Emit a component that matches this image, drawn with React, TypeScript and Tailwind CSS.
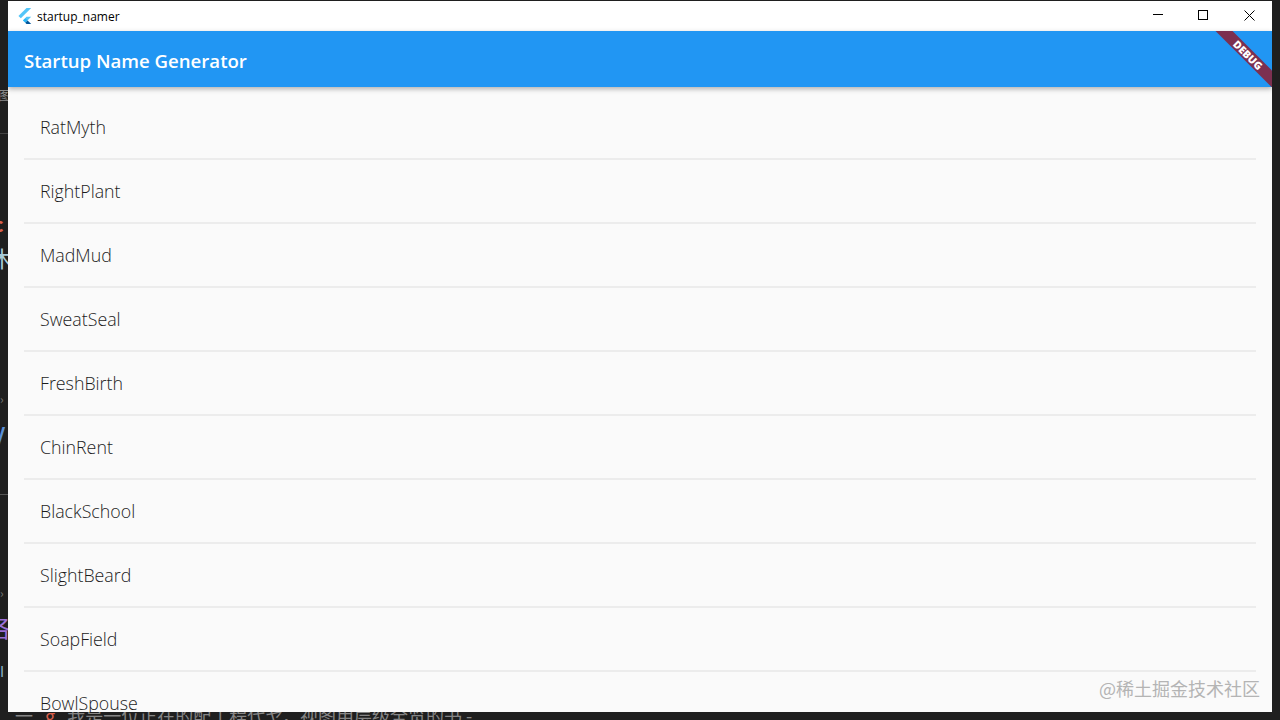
const names = [
  'RatMyth',
  'RightPlant',
  'MadMud',
  'SweatSeal',
  'FreshBirth',
  'ChinRent',
  'BlackSchool',
  'SlightBeard',
  'SoapField',
  'BowlSpouse',
];

function FlutterLogo() {
  return (
    <svg width="14" height="16" viewBox="0 0 14 17">
      <path d="M0 8.5 L8.6 0 L13.6 0 L2.6 11 Z" fill="#54C5F8" />
      <path d="M4.8 13.2 L8.6 9.2 L13.6 9.2 L9.8 13 Z" fill="#54C5F8" />
      <path d="M4.8 13.2 L7.3 10.8 L9.8 13.2 L7.3 15.7 Z" fill="#29B6F6" />
      <path d="M7.3 15.7 L9.8 13.2 L13.6 17 L8.6 17 Z" fill="#01579B" />
    </svg>
  );
}

function WindowButtons() {
  return (
    <div className="ml-auto flex h-full pb-[2px] text-black">
      <div className="flex w-[46px] items-center justify-center pl-[2px]">
        <svg width="10" height="10" viewBox="0 0 10 10" fill="none" stroke="currentColor" shapeRendering="crispEdges">
          <path d="M0 4.5 H10" />
        </svg>
      </div>
      <div className="flex w-[46px] items-center justify-center">
        <svg width="10" height="10" viewBox="0 0 10 10" fill="none" stroke="currentColor" shapeRendering="crispEdges">
          <rect x="0.5" y="0.5" width="9" height="9" />
        </svg>
      </div>
      <div className="flex w-[46px] items-center justify-center">
        <svg width="11" height="11" viewBox="0 0 11 11" fill="none" stroke="currentColor">
          <path d="M0.5 0.5 L10.5 10.5 M10.5 0.5 L0.5 10.5" />
        </svg>
      </div>
    </div>
  );
}

// editor behind the window, only its left edge shows
function EditorEdge() {
  return (
    <div className="flex w-2 shrink-0 flex-col overflow-hidden whitespace-nowrap font-['Noto_Sans_CJK_SC',sans-serif] leading-none">
      <span className="-ml-[2px] mt-[88px] h-[13px] text-[13px] leading-none text-[#8a8a8a]">图</span>
      <div className="mt-[32px] h-px shrink-0 bg-[#444]" />
      <span className="-ml-[7px] mt-[80px] h-[20px] text-[20px] font-bold leading-none text-[#d9604c]">c</span>
      <span className="-ml-[9px] mt-[12px] h-[22px] text-[22px] leading-none text-[#a9cbd8]">木</span>
      <span className="mt-[125px] h-[12px] text-[12px] leading-none text-[#777]">›</span>
      <span className="-ml-[11px] mt-[17px] h-[28px] text-[28px] leading-none text-[#5b8fd6]">V</span>
      <div className="mt-[44px] h-px shrink-0 bg-[#555]" />
      <span className="mt-[92px] h-[12px] text-[12px] leading-none text-[#777]">›</span>
      <span className="-ml-[12px] mt-[16px] h-[24px] text-[24px] leading-none text-[#9a6fd6]">各</span>
      <span className="mt-[25px] h-[14px] text-[14px] leading-none text-[#8fb8cc]">I</span>
    </div>
  );
}

export default function App() {
  return (
    <div className="relative flex h-[720px] w-[1280px] overflow-hidden bg-[#1f1f1f] font-['Open_Sans',sans-serif]">
      <EditorEdge />

      <div className="flex w-[1264px] shrink-0 flex-col pt-px">
        <div className="flex h-[711px] shrink-0 flex-col overflow-hidden bg-[#fafafa]">
          <div className="flex h-[30px] shrink-0 items-center bg-white pl-[10px] text-black">
            <FlutterLogo />
            <span className="ml-[5px] pt-[1px] text-[12px] leading-none">startup_namer</span>
            <WindowButtons />
          </div>
          <div className="relative z-10 flex h-[56px] shrink-0 items-center overflow-hidden bg-[#2196f3] px-4 pt-[3px] shadow-[0_2px_5px_rgba(0,0,0,0.3)]">
            <span className="text-[18.6px] font-semibold text-white">Startup Name Generator</span>
            <div className="absolute right-[-36px] top-[18px] flex h-[12px] w-[120px] rotate-45 items-center justify-center bg-[#7c3050] text-[10.5px] font-extrabold leading-none text-white">
              DEBUG
            </div>
          </div>
          <div className="min-h-0 flex-1 overflow-hidden pt-[9px]">
            {names.map((name) => (
              <div key={name} className="mx-4 flex h-[64px] items-center border-b-2 border-[#ececec] pl-4 text-[17.8px] font-[350] text-[#1c1c1c]">
                {name}
              </div>
            ))}
          </div>
        </div>

        {/* the line of the editor that shows under the window */}
        <div className="flex min-h-0 flex-1 overflow-hidden whitespace-nowrap pl-[7px] font-['Noto_Sans_CJK_SC',sans-serif] text-[18px] leading-none text-[#858585]">
          <span className="-mt-[6px]">一</span>
          <span className="-mt-[6px] ml-3 text-[#d9604c]">g</span>
          <span className="-mt-[6px] ml-3">我是一位正在的配工程代ヤ，视图用层级全览的书 -</span>
        </div>
      </div>

      <div className="w-2 shrink-0" />

      <span className="absolute right-5 top-[679px] font-['Noto_Sans_CJK_SC',sans-serif] text-[18px] leading-none text-[#b4b4b4]">
        @稀土掘金技术社区
      </span>
    </div>
  );
}
